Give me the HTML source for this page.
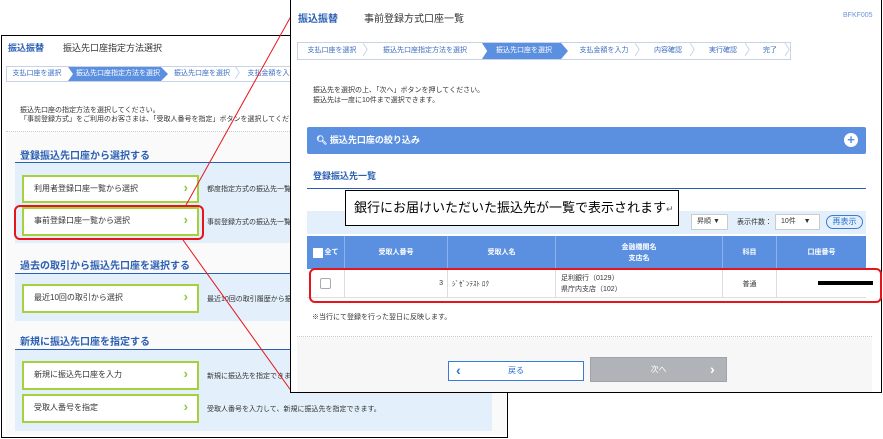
<!DOCTYPE html>
<html><head><meta charset="utf-8"><style>
*{margin:0;padding:0;box-sizing:border-box}
body{width:883px;height:439px;background:#fff;position:relative;overflow:hidden;font-family:"Liberation Sans","Noto Sans CJK JP",sans-serif;color:#333}
.a{position:absolute;white-space:nowrap}
.s7{font-size:7px}.s8{font-size:8px}
.blue{color:#2b5fb4}
.sec{font-size:10px;font-weight:bold;color:#2b5fb4}
.btn{position:absolute;background:#fff;border:2px solid #a5d23c;font-size:8px;padding-left:10px;line-height:24px;color:#333}
.btn i{position:absolute;right:9px;top:-1px;font-style:normal;color:#8cc63f;font-weight:bold;font-size:13px}
.step{position:absolute;font-size:7px;color:#3a6cc0;line-height:16px;text-align:center}
.sep{position:absolute;font-size:14px;color:#c8d4e6;line-height:16px}
.th{position:absolute;top:0;height:33px;border-right:1px solid #8fb0ea;color:#fff;font-size:7px;font-weight:bold;display:flex;align-items:center;justify-content:center;text-align:center;line-height:11px}
.td{position:absolute;top:0;height:29px;border-right:1px solid #ddd;font-size:7px;display:flex;align-items:center}
</style></head><body>

<!-- LEFT PANEL -->
<div class="a" style="left:1px;top:35px;width:507px;height:403px;border:1px solid #000;background:#fff"></div>
<div class="a blue" style="left:8px;top:41px;font-size:9px;font-weight:bold">振込振替</div>
<div class="a" style="left:63px;top:41px;font-size:9px">振込先口座指定方法選択</div>
<div class="a" style="left:6px;top:66px;width:285px;height:16px;border:1px solid #c8d4e6;background:#fff"></div>
<div class="step" style="left:8px;top:66px;width:58px">支払口座を選択</div>
<div class="a" style="left:68px;top:67px;width:100px;height:14px;background:#5b8fe0;clip-path:polygon(0 0,93% 0,100% 50%,93% 100%,0 100%,5% 50%)"></div>
<div class="step" style="left:70px;top:66px;width:96px;color:#fff">振込先口座指定方法を選択</div>
<div class="step" style="left:172px;top:66px;width:60px">振込先口座を選択</div>
<div class="sep" style="left:234px;top:65px">〉</div>
<div class="step" style="left:242px;top:66px;width:60px">支払金額を入力</div>
<div class="a" style="left:6px;top:90px;width:500px;height:345px;background:#fafafa"></div>
<div class="a" style="left:6px;top:90px;width:500px;height:42px;background:#fff;border-bottom:1px dotted #ccc"></div>
<div class="a s7" style="left:20px;top:106px;line-height:9px">振込先口座の指定方法を選択してください。<br>「事前登録方式」をご利用のお客さまは、「受取人番号を指定」ボタンを選択してください。</div>

<div class="a sec" style="left:20px;top:147px">登録振込先口座から選択する</div>
<div class="a" style="left:15px;top:162px;width:477px;height:81px;background:#e3f0fb;border-top:1px solid #2b5fb4"></div>
<div class="btn" style="left:22px;top:175px;width:177px;height:28px">利用者登録口座一覧から選択<i>›</i></div>
<div class="a s7" style="left:207px;top:184px">都度指定方式の振込先一覧から選択</div>
<div class="btn" style="left:22px;top:207px;width:177px;height:29px">事前登録口座一覧から選択<i>›</i></div>
<div class="a s7" style="left:207px;top:217px">事前登録方式の振込先一覧から選択</div>
<div class="a" style="left:14px;top:205px;width:190px;height:35px;border:2px solid #e8141b;border-radius:6px"></div>

<div class="a sec" style="left:20px;top:257px">過去の取引から振込先口座を選択する</div>
<div class="a" style="left:15px;top:273px;width:477px;height:48px;background:#e3f0fb;border-top:1px solid #2b5fb4"></div>
<div class="btn" style="left:22px;top:284px;width:177px;height:29px">最近10回の取引から選択<i>›</i></div>
<div class="a s7" style="left:207px;top:294px">最近10回の取引履歴から振込先を選択</div>

<div class="a sec" style="left:20px;top:333px">新規に振込先口座を指定する</div>
<div class="a" style="left:15px;top:349px;width:477px;height:82px;background:#e3f0fb;border-top:1px solid #2b5fb4"></div>
<div class="btn" style="left:22px;top:361px;width:177px;height:29px">新規に振込先口座を入力<i>›</i></div>
<div class="a s7" style="left:207px;top:371px">新規に振込先を指定できます。</div>
<div class="btn" style="left:22px;top:394px;width:177px;height:29px">受取人番号を指定<i>›</i></div>
<div class="a s7" style="left:207px;top:404px">受取人番号を入力して、新規に振込先を指定できます。</div>

<!-- RED LINES -->
<svg class="a" style="left:0;top:0" width="883" height="439"><line x1="186" y1="205" x2="300" y2="0" stroke="#e8141b" stroke-width="1"/><line x1="183" y1="240" x2="292" y2="392" stroke="#e8141b" stroke-width="1"/></svg>

<!-- RIGHT PANEL -->
<div class="a" style="left:290px;top:-1px;width:592px;height:394px;border:1px solid #000;background:#fff"></div>
<div class="a blue" style="left:298px;top:10px;font-size:10px;font-weight:bold">振込振替</div>
<div class="a" style="left:364px;top:10px;font-size:10px">事前登録方式口座一覧</div>
<div class="a" style="left:843px;top:12px;font-size:7px;color:#6b95d8">BFKF005</div>
<div class="a" style="left:297px;top:42px;width:494px;height:18px;border:1px solid #c8d4e6;background:#fff"></div>
<div class="step" style="left:299px;top:43px;width:66px">支払口座を選択</div>
<div class="sep" style="left:362px;top:42px">〉</div>
<div class="step" style="left:370px;top:43px;width:110px">振込先口座指定方法を選択</div>
<div class="a" style="left:482px;top:43px;width:86px;height:16px;background:#5b8fe0;clip-path:polygon(0 0,92% 0,100% 50%,92% 100%,0 100%,6% 50%)"></div>
<div class="step" style="left:484px;top:43px;width:80px;color:#fff">振込先口座を選択</div>
<div class="step" style="left:570px;top:43px;width:68px">支払金額を入力</div>
<div class="sep" style="left:634px;top:42px">〉</div>
<div class="step" style="left:642px;top:43px;width:52px">内容確認</div>
<div class="sep" style="left:689px;top:42px">〉</div>
<div class="step" style="left:697px;top:43px;width:52px">実行確認</div>
<div class="sep" style="left:744px;top:42px">〉</div>
<div class="step" style="left:752px;top:43px;width:36px">完了</div>
<div class="sep" style="left:784px;top:42px">〉</div>

<div class="a" style="left:297px;top:72px;width:575px;height:320px;background:#f7f7f7"></div>
<div class="a" style="left:297px;top:72px;width:575px;height:265px;background:#fff;border-bottom:1px dotted #ccc"></div>
<div class="a s7" style="left:313px;top:86px;line-height:10px">振込先を選択の上、「次へ」ボタンを押してください。<br>振込先は一度に10件まで選択できます。</div>
<div class="a" style="left:307px;top:127px;width:559px;height:27px;background:#5b8fe0;border-radius:2px"></div>
<div class="a" style="left:316px;top:133px;font-size:9px;font-weight:bold;color:#fff">🔍︎ 振込先口座の絞り込み</div>
<div class="a" style="left:844px;top:133px;width:14px;height:14px;border-radius:50%;background:#fff;color:#5b8fe0;font-size:13px;font-weight:bold;line-height:14px;text-align:center">+</div>

<div class="a sec" style="left:313px;top:169px;font-size:9px">登録振込先一覧</div>
<div class="a" style="left:307px;top:188px;width:559px;height:1px;background:#2b5fb4"></div>
<div class="a" style="left:307px;top:211px;width:559px;height:23px;background:#e3f0fb"></div>
<div class="a s7" style="left:691px;top:214px;width:37px;height:16px;background:#fff;border:1px solid #ccc;line-height:14px;padding-left:5px">昇順 ▼</div>
<div class="a s7" style="left:737px;top:217px">表示件数：</div>
<div class="a s7" style="left:775px;top:214px;width:45px;height:16px;background:#fff;border:1px solid #ccc;line-height:14px;padding-left:5px">10件&nbsp;&nbsp;&nbsp;&nbsp;▼</div>
<div class="a" style="left:826px;top:215px;width:37px;height:14px;border:1px solid #3a7ad8;border-radius:8px;font-size:8px;color:#2b6fd0;text-align:center;line-height:12px">再表示</div>

<div class="a" style="left:307px;top:236px;width:559px;height:33px;background:#5b8fe0">
<div class="th" style="left:0;width:38px"><span style="display:inline-block;width:10px;height:10px;background:#fff;margin-right:2px"></span>全て</div>
<div class="th" style="left:38px;width:103px">受取人番号</div>
<div class="th" style="left:141px;width:108px">受取人名</div>
<div class="th" style="left:249px;width:167px">金融機関名<br>支店名</div>
<div class="th" style="left:416px;width:54px">科目</div>
<div class="th" style="left:470px;width:89px;border:0">口座番号</div>
</div>
<div class="a" style="left:307px;top:269px;width:559px;height:29px;background:#fff;border-bottom:1px solid #ddd">
<div class="td" style="left:0;width:38px;justify-content:center"><span style="display:inline-block;width:11px;height:11px;border:1px solid #aaa;border-radius:2px"></span></div>
<div class="td" style="left:38px;width:103px;justify-content:flex-end;padding-right:4px">3</div>
<div class="td" style="left:141px;width:108px;padding-left:4px">ｼﾞｾﾞﾝﾃｽﾄ ﾛｸ</div>
<div class="td" style="left:249px;width:167px;padding-left:5px;line-height:11px">足利銀行（0129）<br>県庁内支店（102）</div>
<div class="td" style="left:416px;width:54px;justify-content:center">普通</div>
</div>
<div class="a" style="left:818px;top:281px;width:55px;height:4px;background:#000"></div>
<div class="a" style="left:309px;top:268px;width:573px;height:35px;border:2px solid #e8141b;border-radius:6px"></div>
<div class="a s7" style="left:312px;top:312px">※当行にて登録を行った翌日に反映します。</div>

<div class="a" style="left:448px;top:361px;width:136px;height:20px;background:#fff;border:1px solid #3a7ad8;font-size:8px;color:#2b6fd0;line-height:18px;text-align:center">戻る</div>
<div class="a" style="left:456px;top:362px;font-size:14px;line-height:16px;color:#2b6fd0;font-weight:bold">‹</div>
<div class="a" style="left:590px;top:357px;width:137px;height:25px;background:#b0b3b8;border:1px solid #a0a3a8;font-size:8px;color:#fff;line-height:23px;text-align:center">次へ</div>
<div class="a" style="left:710px;top:361px;font-size:14px;line-height:16px;color:#fff;font-weight:bold">›</div>

<!-- CALLOUT -->
<div class="a" style="left:345px;top:190px;width:334px;height:36px;background:#fff;border:1px solid #000;font-size:13px;line-height:33px;padding-left:8px;color:#000">銀行にお届けいただいた振込先が一覧で表示されます<span style="font-size:9px;color:#555">↵</span></div>
</body></html>
